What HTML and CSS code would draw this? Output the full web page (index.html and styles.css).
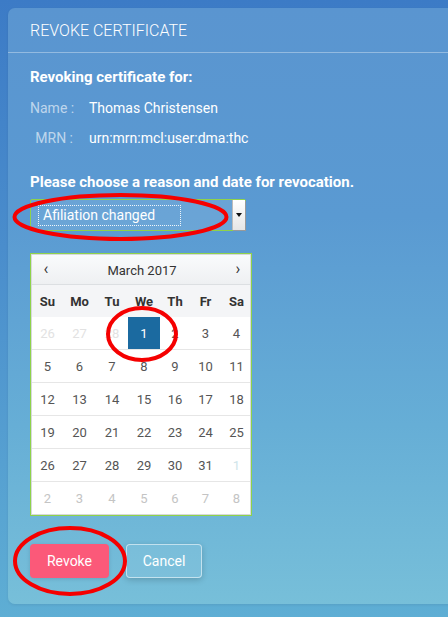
FILE: index.html
```html
<!DOCTYPE html>
<html>
<head>
<meta charset="utf-8">
<link rel="stylesheet" href="styles.css">
</head>
<body>
<div class="panel">
  <div class="panel-head">REVOKE CERTIFICATE</div>
  <div class="panel-body">
    <div class="section-title">Revoking certificate for:</div>
    <div class="info-row"><span class="label">Name :</span><span class="value">Thomas Christensen</span></div>
    <div class="info-row"><span class="label">MRN :</span><span class="value">urn:mrn:mcl:user:dma:thc</span></div>
    <div class="section-title reason">Please choose a reason and date for revocation.</div>
    <div class="select">
      <span class="select-text">Afiliation changed</span>
      <span class="select-btn"><span class="tri"></span></span>
    </div>
    <div class="calendar">
      <div class="cal-inner">
        <div class="cal-head"><span class="nav">&#8249;</span><span class="month">March 2017</span><span class="nav">&#8250;</span></div>
        <div class="cal-grid dow">
          <span>Su</span><span>Mo</span><span>Tu</span><span>We</span><span>Th</span><span>Fr</span><span>Sa</span>
        </div>
        <div class="cal-grid week"><span class="prev">26</span><span class="prev">27</span><span class="prev">28</span><span class="sel">1</span><span>2</span><span>3</span><span>4</span></div>
        <div class="cal-grid week"><span>5</span><span>6</span><span>7</span><span>8</span><span>9</span><span>10</span><span>11</span></div>
        <div class="cal-grid week"><span>12</span><span>13</span><span>14</span><span>15</span><span>16</span><span>17</span><span>18</span></div>
        <div class="cal-grid week"><span>19</span><span>20</span><span>21</span><span>22</span><span>23</span><span>24</span><span>25</span></div>
        <div class="cal-grid week"><span>26</span><span>27</span><span>28</span><span>29</span><span>30</span><span>31</span><span class="next1">1</span></div>
        <div class="cal-grid week last"><span class="next">2</span><span class="next">3</span><span class="next">4</span><span class="next">5</span><span class="next">6</span><span class="next">7</span><span class="next">8</span></div>
      </div>
    </div>
    <div class="actions">
      <button class="btn btn-revoke">Revoke</button>
      <button class="btn btn-cancel">Cancel</button>
    </div>
  </div>
</div>
<svg class="marks" width="448" height="617" viewBox="0 0 448 617">
  <ellipse cx="120.5" cy="217" rx="106" ry="22" />
  <ellipse cx="142" cy="334" rx="34" ry="26" />
  <ellipse cx="70" cy="561" rx="55" ry="33" />
</svg>
</body>
</html>
```

FILE: styles.css
```css
html, body {
  margin: 0;
  padding: 0;
}
body {
  width: 448px;
  height: 617px;
  overflow: hidden;
  position: relative;
  font-family: Roboto, "Liberation Sans", sans-serif;
  background: linear-gradient(180deg, #3c7bc6 0%, #4a8dcc 40%, #56a0d1 75%, #5eaed4 100%);
}
.panel {
  margin: 8px 0 0 8px;
  width: 460px;
  height: 596px;
  box-sizing: border-box;
  border-radius: 7px;
  background: linear-gradient(180deg, #5a95d0 0%, #5a9ad2 35%, #66aed6 70%, #77bfd9 100%);
  box-shadow: 0 1px 3px rgba(0, 0, 0, 0.08);
}
.panel-head {
  height: 45px;
  box-sizing: border-box;
  padding: 13px 0 0 22px;
  font-size: 16px;
  font-weight: 300;
  color: #fff;
  border-bottom: 1px solid rgba(255, 255, 255, 0.35);
}
.panel-body {
  padding: 14px 0 0 22px;
}
.section-title {
  font-size: 15px;
  font-weight: 700;
  color: #fff;
  line-height: 20px;
}
.info-row {
  display: flex;
  font-size: 14px;
  line-height: 20px;
  margin-top: 10px;
  color: #fff;
  white-space: nowrap;
}
.section-title + .info-row { margin-top: 11px; }
.label {
  flex: none;
  width: 43px;
  text-align: right;
  color: rgba(255, 255, 255, 0.62);
  margin-right: 16px;
  white-space: nowrap;
}
.reason {
  margin-top: 24px;
}
.select {
  margin-top: 7px;
  width: 216px;
  height: 32px;
  box-sizing: border-box;
  border: 1px solid #8fd24a;
  background: rgba(255, 255, 255, 0.1);
  display: flex;
  align-items: center;
  position: relative;
  border-radius: 2px;
}
.select-text {
  margin-left: 8px;
  width: 141px;
  height: 19px;
  line-height: 19px;
  padding-left: 4px;
  box-sizing: border-box;
  outline: 1px dotted rgba(255, 255, 255, 0.9);
  font-size: 14px;
  color: #fff;
  white-space: nowrap;
}
.select-btn {
  margin-left: auto;
  width: 12px;
  height: 30px;
  background: linear-gradient(180deg, #ffffff, #e6e6e6);
  border-left: 1px solid #bbb;
  box-shadow: 1px 1px 0 #999;
  display: flex;
  align-items: center;
  justify-content: center;
}
.tri {
  width: 0;
  height: 0;
  border-left: 3px solid transparent;
  border-right: 3px solid transparent;
  border-top: 4px solid #111;
}
.calendar {
  margin-top: 22px;
  width: 222px;
  box-sizing: border-box;
  border: 1px solid #8fd24a;
}
.cal-inner {
  border: 1px solid #d6d9dc;
  background: #fff;
}
.cal-head {
  height: 29px;
  display: flex;
  align-items: center;
  padding: 0 8px 0 10px;
  background: linear-gradient(180deg, #fafbfc, #eef0f2);
  border-bottom: 1px solid #dcdfe2;
  font-size: 13px;
  color: #333;
}
.cal-head .month {
  flex: 1;
  text-align: center;
  padding-top: 1px;
}
.cal-head .nav {
  font-size: 16px;
  color: #333;
  width: 8px;
  text-align: center;
  padding-bottom: 3px;
}
.cal-grid {
  display: grid;
  grid-template-columns: 31px 33px 32px 32px 30px 31px 31px;
}
.cal-grid span {
  display: flex;
  align-items: center;
  justify-content: center;
}
.dow {
  height: 32px;
  background: #f4f5f7;
  font-size: 13px;
  font-weight: 700;
  color: #333;
}
.week {
  height: 32px;
  border-bottom: 1px solid #e6e6e6;
  font-size: 13px;
  color: #555;
}
.week.last {
  border-bottom: none;
}
.week span.prev { color: #e2e2e2; }
.week span.next { color: #c4c4c4; }
.week span.next1 { color: #cfe4ea; }
.week span.sel {
  background: #1b6aa0;
  color: #fff;
}
.actions {
  display: flex;
  gap: 17px;
  margin-top: 28px;
}
.btn {
  height: 34px;
  border-radius: 4px;
  font-family: Roboto, "Liberation Sans", sans-serif;
  font-size: 14px;
  color: #fff;
  cursor: pointer;
  padding: 0;
}
.btn-revoke {
  width: 79px;
  background: #fb5979;
  border: none;
  box-shadow: 0 1px 4px rgba(0, 0, 0, 0.12);
}
.btn-cancel {
  width: 76px;
  background: rgba(255, 255, 255, 0.06);
  border: 1px solid rgba(255, 255, 255, 0.55);
  box-shadow: 0 2px 6px rgba(0, 0, 0, 0.18);
}
.marks {
  position: absolute;
  left: 0;
  top: 0;
  pointer-events: none;
}
.marks ellipse {
  fill: none;
  stroke: #f50000;
  stroke-width: 4;
}
```
